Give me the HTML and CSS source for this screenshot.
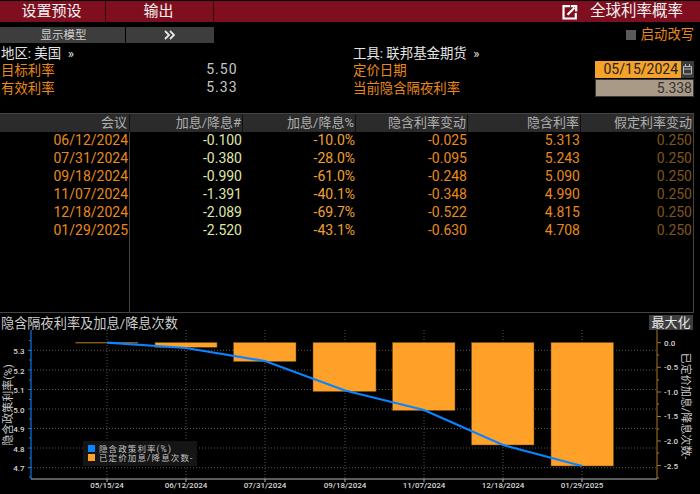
FILE: index.html
```html
<!DOCTYPE html>
<html lang="zh">
<head>
<meta charset="utf-8">
<title>全球利率概率</title>
<link rel="stylesheet" href="styles.css">
</head>
<body>
<header class="topbar">
  <div class="tab tab-a">设置预设</div>
  <div class="tab tab-b">输出</div>
  <div class="topbar-right">
    <svg class="ext-icon" width="16" height="16" viewBox="0 0 16 16"><path d="M8 2.2H1.5V14.5H13.8V9" fill="none" stroke="#fff" stroke-width="2.2"/><path d="M5.5 10.8L12.5 3.8M8.8 2.2H14.2V7.5" fill="none" stroke="#fff" stroke-width="2.2"/></svg>
    <span class="top-title">全球利率概率</span>
  </div>
</header>
<div class="toolbar">
  <div class="tool-btn tool-a">显示模型</div>
  <div class="tool-btn tool-b"><svg width="11" height="10" viewBox="0 0 11 10"><path d="M1 1L5 5L1 9M6 1L10 5L6 9" fill="none" stroke="#e8e8e8" stroke-width="1.8"/></svg></div>
  <div class="override"><span class="check"></span><span>启动改写</span></div>
</div>
<section class="info">
  <div class="info-col info-left">
    <div class="info-row white">地区: 美国&nbsp; »</div>
    <div class="info-row"><span class="orange">目标利率</span><span class="val">5.50</span></div>
    <div class="info-row"><span class="orange">有效利率</span><span class="val">5.33</span></div>
  </div>
  <div class="info-col info-right">
    <div class="info-row white">工具: 联邦基金期货&nbsp; »</div>
    <div class="info-row">
      <span class="orange">定价日期</span>
      <div class="date-field"><span class="date-input">05/15/2024</span><span class="cal"><svg width="9" height="11" viewBox="0 0 9 11"><path d="M0.5 2.5H8.5V10H0.5ZM0.5 5H8.5" fill="none" stroke="#bbb"/><path d="M2.5 0V2M6.5 0V2" stroke="#bbb"/></svg></span></div>
    </div>
    <div class="info-row">
      <span class="orange">当前隐含隔夜利率</span>
      <div class="rate-field">5.338</div>
    </div>
  </div>
</section>
<section class="table">
  <div class="thead">
    <div>会议</div><div>加息/降息#</div><div>加息/降息%</div><div>隐含利率变动</div><div>隐含利率</div><div>假定利率变动</div>
  </div>
  <div class="tbody">
    <div class="trow"><div class="c-date">06/12/2024</div><div class="c-num">-0.100</div><div class="c-pct">-10.0%</div><div class="c-chg">-0.025</div><div class="c-rate">5.313</div><div class="c-dim">0.250</div></div>
    <div class="trow"><div class="c-date">07/31/2024</div><div class="c-num">-0.380</div><div class="c-pct">-28.0%</div><div class="c-chg">-0.095</div><div class="c-rate">5.243</div><div class="c-dim">0.250</div></div>
    <div class="trow"><div class="c-date">09/18/2024</div><div class="c-num">-0.990</div><div class="c-pct">-61.0%</div><div class="c-chg">-0.248</div><div class="c-rate">5.090</div><div class="c-dim">0.250</div></div>
    <div class="trow"><div class="c-date">11/07/2024</div><div class="c-num">-1.391</div><div class="c-pct">-40.1%</div><div class="c-chg">-0.348</div><div class="c-rate">4.990</div><div class="c-dim">0.250</div></div>
    <div class="trow"><div class="c-date">12/18/2024</div><div class="c-num">-2.089</div><div class="c-pct">-69.7%</div><div class="c-chg">-0.522</div><div class="c-rate">4.815</div><div class="c-dim">0.250</div></div>
    <div class="trow"><div class="c-date">01/29/2025</div><div class="c-num">-2.520</div><div class="c-pct">-43.1%</div><div class="c-chg">-0.630</div><div class="c-rate">4.708</div><div class="c-dim">0.250</div></div>
  </div>
</section>
<div class="chart-head">
  <span class="chart-title">隐含隔夜利率及加息/降息次数</span>
  <span class="max-btn">最大化</span>
</div>
<svg class="chart" width="700" height="164" viewBox="0 330 700 164">
  <g class="grid">
    <path d="M31 350.3H657M31 370H657M31 389.5H657M31 409H657M31 428.5H657M31 448H657M31 467.7H657"/>
    <path d="M107 330V479M186 330V479M265 330V479M345 330V479M424 330V479M503 330V479M582 330V479"/>
  </g>
  <g class="bars">
    <rect class="bar-thin" x="75.5" y="342" width="62.5" height="1.4"/>
    <rect x="155" y="342.5" width="62" height="4.8"/>
    <rect x="233.5" y="342.5" width="62.5" height="19"/>
    <rect x="313" y="342.5" width="63" height="49"/>
    <rect x="392.5" y="342.5" width="62.5" height="68"/>
    <rect x="471.5" y="342.5" width="62.5" height="102.5"/>
    <rect x="551" y="342.5" width="62.5" height="123.5"/>
  </g>
  <polyline class="line" points="107,342.7 186,348 265,361 345,390.5 424,410 503,445 582,466"/>
  <path class="axis-left" d="M31 330V479M28 350.3H31M28 370H31M28 389.5H31M28 409H31M28 428.5H31M28 448H31M28 467.7H31"/>
  <path class="axis-minor-left" d="M29 340.5H31M29 360H31M29 380H31M29 399.5H31M29 419H31M29 438H31M29 458H31M29 477H31"/>
  <path class="axis-bottom" d="M31 479H657M107 479V482M186 479V482M265 479V482M345 479V482M424 479V482M503 479V482M582 479V482"/>
  <path class="axis-right" d="M657 330V479M657 342.7H661M657 367.3H661M657 392H661M657 416.5H661M657 441H661M657 465.5H661M657 355H659M657 380H659M657 404H659M657 429H659M657 453H659M657 478H659"/>
  <g class="tick-l">
    <text x="24.5" y="354">5.3</text><text x="24.5" y="374">5.2</text><text x="24.5" y="393">5.1</text><text x="24.5" y="413">5.0</text><text x="24.5" y="432">4.9</text><text x="24.5" y="452">4.8</text><text x="24.5" y="471">4.7</text>
  </g>
  <g class="tick-r">
    <text x="664" y="346">0.0</text><text x="664" y="370">-0.5</text><text x="664" y="395">-1.0</text><text x="664" y="419">-1.5</text><text x="664" y="444">-2.0</text><text x="664" y="469">-2.5</text>
  </g>
  <g class="tick-x">
    <text x="107" y="488">05/15/24</text><text x="186" y="488">06/12/2024</text><text x="265" y="488">07/31/2024</text><text x="345" y="488">09/18/2024</text><text x="424" y="488">11/07/2024</text><text x="503" y="488">12/18/2024</text><text x="582" y="488">01/29/2025</text>
  </g>
  <text class="axis-title" transform="translate(12 405) rotate(-90)">隐含政策利率(%)</text>
  <text class="axis-title" transform="translate(682 406) rotate(90)">已定价加息/降息次数-</text>
  <rect class="legend-bg" x="83" y="441" width="114" height="25"/>
  <rect class="sw-blue" x="88" y="445" width="7" height="7"/>
  <rect class="sw-orange" x="88" y="454" width="7" height="7"/>
  <text class="legend-t" x="99" y="452">隐含政策利率(%)</text>
  <text class="legend-t" x="99" y="461">已定价加息/降息次数-</text>
</svg>
</body>
</html>
```
FILE: styles.css
```css
* { box-sizing: border-box; }
html, body { margin: 0; padding: 0; }
body {
  width: 700px;
  height: 494px;
  overflow: hidden;
  background: #000;
  color: #ddd;
  font-family: "Roboto", "Noto Sans CJK SC", sans-serif;
  font-size: 14px;
}
.topbar {
  display: flex;
  height: 21px;
  margin-top: 1px;
  background: #7f0f1f;
  color: #f2f2f2;
  font-size: 15px;
  line-height: 21px;
}
.tab { text-align: center; border-right: 1px solid #2b0a10; }
.tab-a { width: 106px; padding-right: 2px; }
.tab-b { width: 108px; padding-right: 2px; }
.topbar-right {
  flex: 1;
  display: flex;
  justify-content: flex-end;
  align-items: center;
  gap: 12px;
  padding-right: 17px;
}
.top-title { font-size: 15.5px; }
.ext-icon { display: block; }
.toolbar {
  display: flex;
  height: 16px;
  margin-top: 5px;
  font-size: 11.5px;
  line-height: 16px;
}
.tool-btn { background: #3d3d3d; color: #cfcfcf; text-align: center; }
.tool-a { width: 125px; margin-right: 1px; padding-left: 2px; }
.tool-b {
  width: 88px;
  display: flex;
  align-items: center;
  justify-content: center;
  padding-right: 1px;
}
.override {
  margin-left: auto;
  margin-right: 6px;
  display: flex;
  align-items: center;
  gap: 5px;
  color: #e8891a;
  font-size: 13.3px;
}
.check { width: 10px; height: 10px; background: #5a5a5a; }
.info {
  display: flex;
  height: 70px;
}
.info-col { display: flex; flex-direction: column; }
.info-left { width: 353px; padding-left: 1px; padding-right: 115.5px; }
.info-right { width: 341px; }
.info-row {
  display: flex;
  justify-content: space-between;
  align-items: center;
  height: 17.5px;
  font-size: 13.4px;
}
.white { color: #e4e4e4; }
.orange { color: #e8891a; }
.val { letter-spacing: 1px; color: #c8c8c8; font-size: 14px; }
.date-field { display: flex; height: 17px; }
.date-input {
  width: 86px;
  background: #f4a22a;
  color: #222;
  text-align: right;
  padding-right: 3px;
  line-height: 17px;
  font-size: 14px;
}
.cal {
  width: 13px;
  background: #3b3b3b;
  display: flex;
  align-items: center;
  justify-content: center;
}
.rate-field {
  width: 99px;
  height: 18px;
  margin-top: 2px;
  background: #a89a86;
  color: #333;
  border: 1px solid #3b3b3b;
  text-align: right;
  padding-right: 1px;
  line-height: 16px;
  font-size: 14px;
}
.table {
  height: 200px;
  width: 694px;
  border-top: 1px solid #444;
  border-bottom: 1px solid #444;
  border-right: 1px solid #444;
}
.thead, .trow {
  display: grid;
  grid-template-columns: 130px 113px 113px 112px 113px 112px;
}
.thead {
  height: 18px;
  line-height: 17px;
  background: #2b2b2b;
  color: #b0b0b0;
  font-size: 13px;
  text-align: right;
}
.thead > div { padding-right: 1px; border-right: 1px solid #111; }
.thead > div:first-child { padding-right: 2px; }
.thead > div:last-child { border-right: 0; }
.tbody { height: 180px; background: linear-gradient(#444, #444) 129px 0 / 1px 100% no-repeat; }
.trow {
  height: 18px;
  line-height: 16px;
  text-align: right;
  font-size: 14px;
}
.trow > div { padding-right: 1px; }
.trow > .c-date { padding-right: 2px; }
.c-date { color: #e8891a; }
.c-num { color: #dfe6a8; }
.c-pct { color: #f2a030; }
.c-chg { color: #e8891a; }
.c-rate { color: #e8891a; }
.c-dim { color: #80561a; }
.chart-head {
  display: flex;
  justify-content: space-between;
  align-items: center;
  height: 17px;
  padding: 1px 7px 0 1px;
}
.chart-title { font-size: 13.2px; color: #ccc; }
.max-btn {
  width: 44px;
  height: 15px;
  background: #3d3d3d;
  color: #e8e8e8;
  font-size: 13px;
  line-height: 15px;
  text-align: center;
}
.chart { display: block; }
.grid path { fill: none; stroke: #555; stroke-width: 1; stroke-dasharray: 1 2; }
.bars rect { fill: #ffa028; stroke: #6e4a12; stroke-width: 0.5; }
.bars .bar-thin { fill: #8a5a1a; stroke: none; }
.line { fill: none; stroke: #0a84ff; stroke-width: 2.2; }
.axis-left { fill: none; stroke: #0a78e0; stroke-width: 1.2; }
.axis-minor-left { fill: none; stroke: #0a78e0; stroke-width: 1; }
.axis-bottom { fill: none; stroke: #b5b5b5; stroke-width: 1; }
.axis-right { fill: none; stroke: #a8742a; stroke-width: 1; }
.tick-l text, .tick-r text, .tick-x text { font-size: 8px; font-weight: 500; fill: #d8d8d8; }
.tick-l text { text-anchor: end; }
.tick-x text { text-anchor: middle; }
.axis-title { font-size: 11px; fill: #c8c8c8; text-anchor: middle; }
.legend-bg { fill: #151515; }
.sw-blue { fill: #0a84ff; }
.sw-orange { fill: #ffa028; }
.legend-t { font-size: 8.5px; fill: #c4c4c4; letter-spacing: 1.1px; }
```
